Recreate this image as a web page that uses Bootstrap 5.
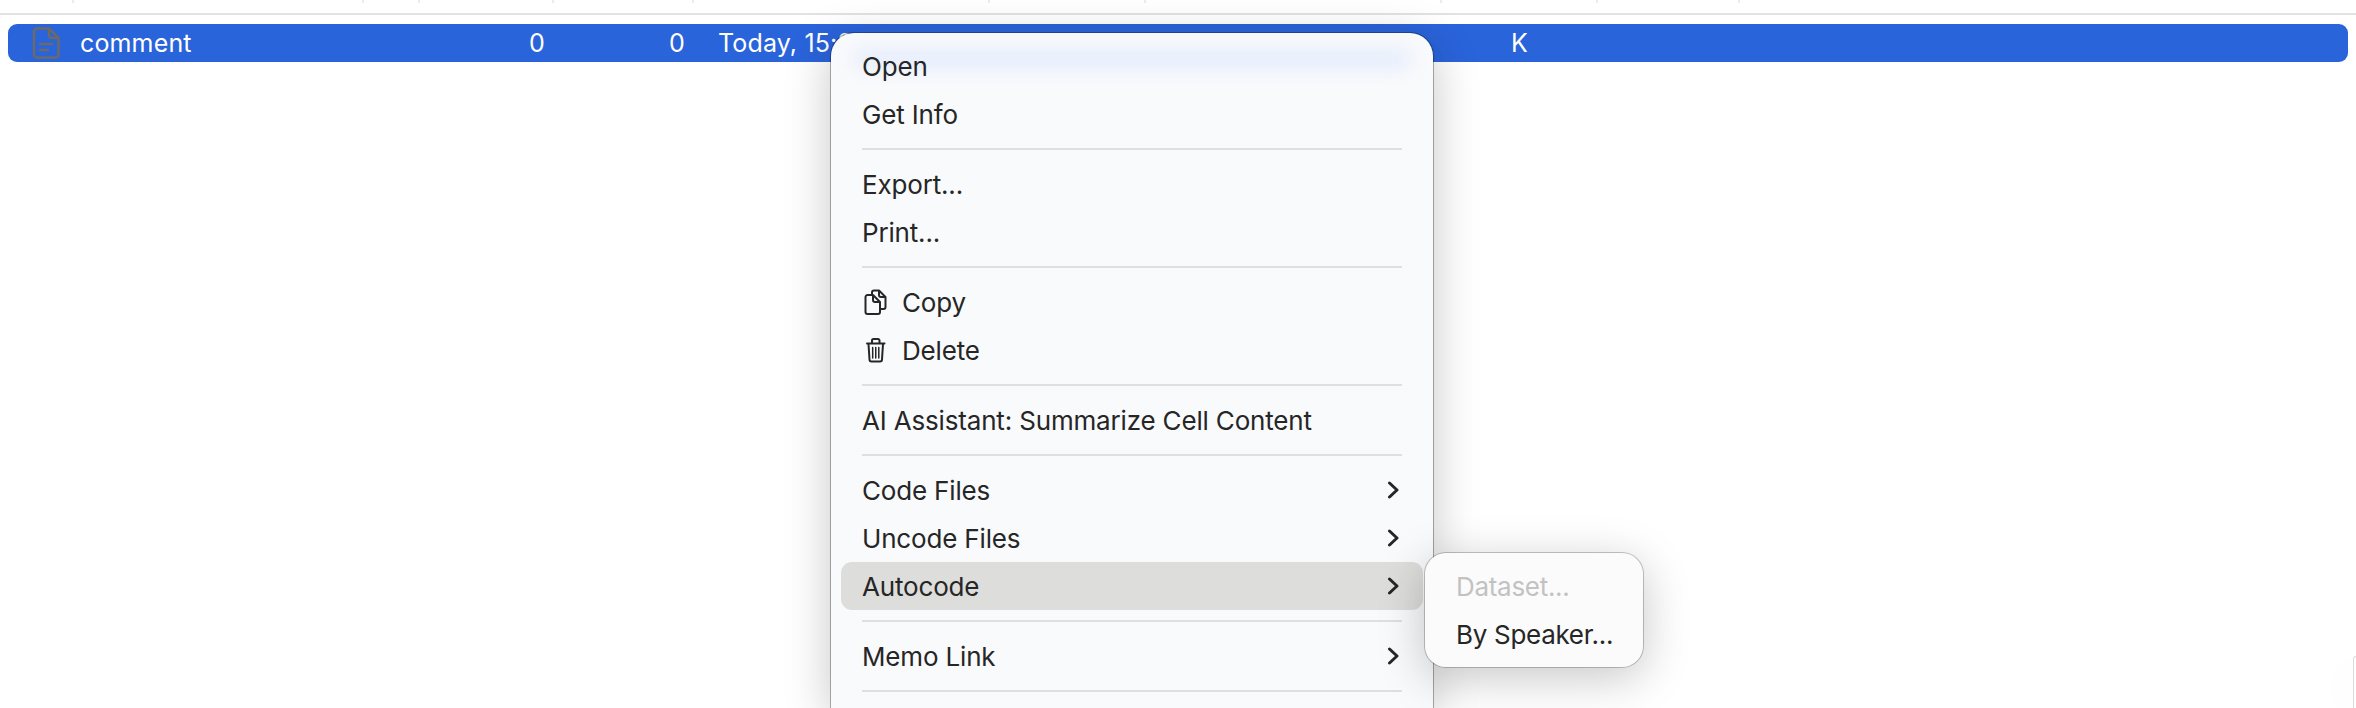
<!DOCTYPE html>
<html lang="en">
<head>
  <meta charset="UTF-8" />
  <title>Documents - context menu</title>
  <link href="https://cdn.jsdelivr.net/npm/bootstrap@5.3.3/dist/css/bootstrap.min.css" rel="stylesheet" />
  <style>
    html, body {
      height: 708px;
      overflow: hidden;
      background-color: #fff;
    }
    body {
      font-family: Inter, "Liberation Sans", sans-serif;
      font-size: 25px;
      color: #262626;
      position: relative;
    }
    /* column ticks left over from the table header */
    .head-ticks {
      height: 13px;
      border-bottom: 2px solid #e2e2e2;
      box-sizing: content-box;
    }
    .tick-col {
      height: 3px;
      border-right: 2px solid #ececec;
      flex: none;
    }
    .doc-row {
      height: 38px;
      margin: 9px 8px 0 8px;
      background-color: #2a64db;
      border-radius: 9px;
      color: #fff;
      line-height: 38px;
      letter-spacing: .15px;
      white-space: nowrap;
    }
    .doc-icon { width: 28px; height: 32px; margin-left: 24px; flex: none; }
    .doc-name { width: 340px; margin-left: 20px; flex: none; }
    .doc-num { flex: none; text-align: right; }
    .num-a { width: 125px; }
    .num-b { width: 140px; }
    .doc-date { width: 793px; margin-left: 33px; flex: none; }

    .ctx-menu {
      --bs-dropdown-min-width: 0;
      --bs-dropdown-padding-x: 0;
      --bs-dropdown-font-size: 26px;
      --bs-dropdown-color: #262626;
      --bs-dropdown-bg: #f9fafc;
      --bs-dropdown-border-color: rgba(0, 0, 0, .3);
      --bs-dropdown-border-radius: 24px;
      --bs-dropdown-link-color: #262626;
      box-shadow: 0 10px 46px rgba(0, 0, 0, .22);
    }
    /* runs off the bottom of the screenshot, so no bottom edge */
    .main-menu {
      left: 830px;
      top: 32px;
      width: 604px;
      height: 676px;
      padding: 9px 0 0;
      border-bottom: 0;
      border-bottom-left-radius: 0;
      border-bottom-right-radius: 0;
    }
    .sub-menu {
      left: 1424px;
      top: 552px;
      width: 220px;
      padding: 9px 0 9px;
      --bs-dropdown-bg: #fbfbfb;
      --bs-dropdown-border-color: rgba(0, 0, 0, .22);
      --bs-dropdown-border-radius: 22px;
      z-index: 1001;
    }
    .row-glow {
      position: absolute;
      left: 24px;
      right: 24px;
      top: 18px;
      height: 16px;
      background-color: #dfe8fc;
      filter: blur(10px);
    }
    .ctx-item {
      position: relative;
      display: flex;
      align-items: center;
      height: 48px;
      margin: 0 10px;
      width: auto;
      padding: 0 24px 0 21px;
      font-size: 26px;
      letter-spacing: -.17px;
      color: #262626;
      border-radius: 11px;
    }
    .ctx-item:hover { background: none; color: #262626; }
    .sub-menu .ctx-item { margin: 0; padding: 0 0 0 31px; letter-spacing: -.3px; }
    .ctx-item.is-open { background-color: #dddddb; }
    .ctx-item.is-off { color: #c2c2c2; }
    .ctx-sep {
      height: 2px;
      margin: 10px 31px;
      background-color: #dfdfe2;
    }
    .item-icon { width: 23px; height: 26px; margin-right: 15px; margin-left: 2px; flex: none; }
    .item-chev { width: 12px; height: 18px; margin-left: auto; flex: none; }
    /* corner of another window, bottom right */
    .window-corner {
      position: absolute;
      right: 0;
      bottom: 0;
      width: 3px;
      height: 52px;
      background-color: #fff;
      border-left: 1px solid #dcdcdc;
      border-top: 1px solid #dcdcdc;
      border-top-left-radius: 3px;
      box-shadow: 0 6px 40px rgba(0, 0, 0, .14);
    }
  </style>
</head>
<body>

  <!-- table header remains -->
  <div class="head-ticks d-flex">
    <div class="tick-col" style="width: 74px"></div>
    <div class="tick-col" style="width: 290px"></div>
    <div class="tick-col" style="width: 56px"></div>
    <div class="tick-col" style="width: 134px"></div>
    <div class="tick-col" style="width: 140px"></div>
    <div class="tick-col" style="width: 296px"></div>
    <div class="tick-col" style="width: 156px"></div>
    <div class="tick-col" style="width: 296px"></div>
    <div class="tick-col" style="width: 156px"></div>
    <div class="tick-col" style="width: 142px"></div>
  </div>

  <!-- selected row -->
  <div class="doc-row d-flex align-items-center">
    <svg class="doc-icon" viewBox="0 0 28 32" fill="none" stroke="#6a6a6a" stroke-width="2.6" stroke-linejoin="round">
      <path d="M5 1.500h12l9.500 9.500v16.500a3 3 0 0 1-3 3H5a3 3 0 0 1-3-3v-23a3 3 0 0 1 3-3z"/>
      <path d="M17 1.500v6.500a3 3 0 0 0 3 3h6.500"/>
      <path d="M8 17h12M8 23h8" stroke-linecap="round"/>
    </svg>
    <div class="doc-name">comment</div>
    <div class="doc-num num-a">0</div>
    <div class="doc-num num-b">0</div>
    <div class="doc-date">Today, 15:27</div>
    <div>K</div>
  </div>

  <!-- context menu -->
  <div class="dropdown-menu show ctx-menu main-menu">
    <div class="row-glow"></div>
    <a class="dropdown-item ctx-item" href="#">Open</a>
    <a class="dropdown-item ctx-item" href="#">Get Info</a>
    <div class="ctx-sep"></div>
    <a class="dropdown-item ctx-item" href="#">Export...</a>
    <a class="dropdown-item ctx-item" href="#">Print...</a>
    <div class="ctx-sep"></div>
    <a class="dropdown-item ctx-item" href="#">
      <svg class="item-icon" viewBox="0 0 23 26" fill="none" stroke="#262626" stroke-width="2" stroke-linejoin="round">
        <path d="M8 5V3.500a2 2 0 0 1 2-2h5l6.500 6.500v10a2 2 0 0 1-2 2H17"/>
        <path d="M15 1.500v4.500a2 2 0 0 0 2 2h4.500"/>
        <path d="M3.500 6H9l7 7v10a2 2 0 0 1-2 2H3.500a2 2 0 0 1-2-2V8a2 2 0 0 1 2-2z"/>
        <path d="M9 6v5a2 2 0 0 0 2 2h5"/>
      </svg>
      Copy
    </a>
    <a class="dropdown-item ctx-item" href="#">
      <svg class="item-icon" viewBox="0 0 23 26" fill="none" stroke="#262626" stroke-width="2" stroke-linecap="round">
        <path d="M3 6.500h17.500M8 6V3.500a1.500 1.500 0 0 1 1.500-1.500h4.500a1.500 1.500 0 0 1 1.500 1.500V6"/>
        <path d="M4.500 7l1 15.500a2 2 0 0 0 2 2h8.500a2 2 0 0 0 2-2L19 7"/>
        <path d="M8.700 10.500v10.500M11.750 10.500v10.500M14.800 10.500v10.500" stroke-width="1.500"/>
      </svg>
      Delete
    </a>
    <div class="ctx-sep"></div>
    <a class="dropdown-item ctx-item" href="#">AI Assistant: Summarize Cell Content</a>
    <div class="ctx-sep"></div>
    <a class="dropdown-item ctx-item" href="#">Code Files
      <svg class="item-chev" viewBox="0 0 12 18" fill="none" stroke="#262626" stroke-width="3" stroke-linecap="round" stroke-linejoin="round"><path d="M2.500 2l7.500 7-7.500 7"/></svg>
    </a>
    <a class="dropdown-item ctx-item" href="#">Uncode Files
      <svg class="item-chev" viewBox="0 0 12 18" fill="none" stroke="#262626" stroke-width="3" stroke-linecap="round" stroke-linejoin="round"><path d="M2.500 2l7.500 7-7.500 7"/></svg>
    </a>
    <a class="dropdown-item ctx-item is-open" href="#">Autocode
      <svg class="item-chev" viewBox="0 0 12 18" fill="none" stroke="#262626" stroke-width="3" stroke-linecap="round" stroke-linejoin="round"><path d="M2.500 2l7.500 7-7.500 7"/></svg>
    </a>
    <div class="ctx-sep"></div>
    <a class="dropdown-item ctx-item" href="#">Memo Link
      <svg class="item-chev" viewBox="0 0 12 18" fill="none" stroke="#262626" stroke-width="3" stroke-linecap="round" stroke-linejoin="round"><path d="M2.500 2l7.500 7-7.500 7"/></svg>
    </a>
    <div class="ctx-sep"></div>
  </div>

  <!-- Autocode submenu -->
  <div class="dropdown-menu show ctx-menu sub-menu">
    <div class="dropdown-item ctx-item is-off">Dataset...</div>
    <a class="dropdown-item ctx-item" href="#">By Speaker...</a>
  </div>

  <div class="window-corner"></div>

</body>
</html>
